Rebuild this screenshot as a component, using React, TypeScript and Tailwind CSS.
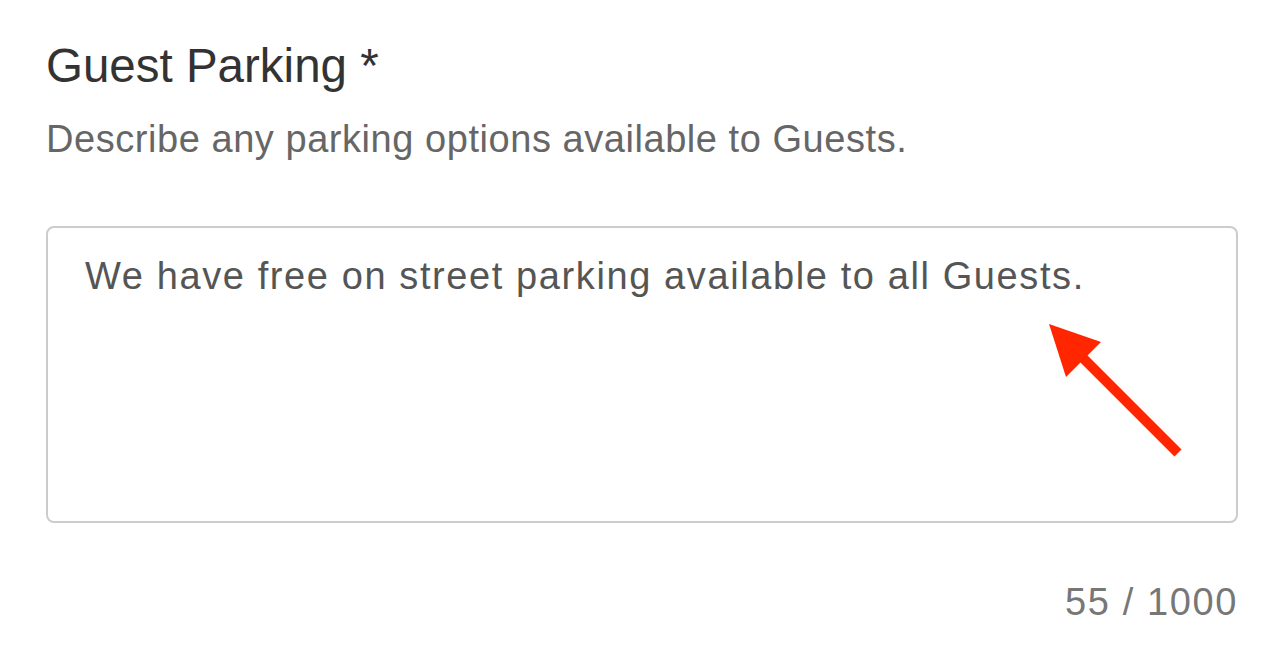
import React from 'react';

const text = 'We have free on street parking available to all Guests.';

const Arrow: React.FC = () => (
  <svg
    className="pointer-events-none absolute left-0 top-0"
    width={1284}
    height={670}
    viewBox="0 0 1284 670"
  >
    <polygon points="1049,324 1101,342 1066,377" fill="#ff2600" />
    <line x1={1072} y1={347} x2={1178} y2={453} stroke="#ff2600" strokeWidth={10} />
  </svg>
);

export default function App() {
  return (
    <div
      className="relative h-[670px] w-[1284px] overflow-hidden bg-white px-[46px]"
      style={{ fontFamily: '"Liberation Sans", Arial, sans-serif' }}
    >
      <h1 className="pt-[38px] text-[47.5px] leading-[56px] font-normal text-[#333333]">
        Guest Parking *
      </h1>
      <p className="mt-[23px] text-[38px] leading-[44px] tracking-[0.55px] text-[#666666]">
        Describe any parking options available to Guests.
      </p>
      <textarea
        readOnly
        defaultValue={text}
        className="mt-[65px] block h-[297px] w-full resize-none rounded-[8px] border-2 border-[#cccccc] pt-[27px] pl-[37px] pr-6 text-[38px] leading-[42px] tracking-[1.6px] text-[#555555] outline-none"
      />
      <div className="mt-[57px] text-right text-[38px] leading-[44px] tracking-[1.6px] text-[#777777]">
        55 / 1000
      </div>
      <Arrow />
    </div>
  );
}
